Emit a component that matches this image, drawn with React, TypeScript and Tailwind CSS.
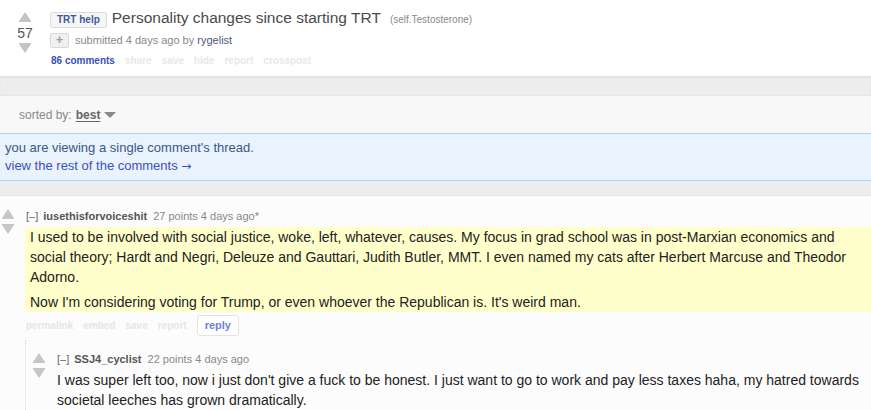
function Arrow({ dir, color = "#c6c6c6" }: { dir: "up" | "down"; color?: string }) {
  const pts = dir === "up" ? "6,0 12,9 12,10 0,10 0,9" : "0,0 12,0 12,1 6,10 0,1";
  return (
    <svg width="12" height="10" viewBox="0 0 12 10" className="block">
      <polygon points={pts} fill={color} />
    </svg>
  );
}

function Tagline({ user, meta }: { user: string; meta: string }) {
  return (
    <div className="text-[11px] leading-[14px] text-[#888]">
      <span className="text-[#666]">[–]</span>
      <span className="ml-[5px] font-bold text-[#555]">{user}</span>
      <span className="ml-[6px]">{meta}</span>
    </div>
  );
}

export default function App() {
  return (
    <div className="min-h-[410px] bg-[#fcfcfc] font-['Liberation_Sans',Arial,sans-serif]">
      <header className="flex h-[76px] bg-white">
        <div className="flex w-[50px] flex-col items-center pt-[12px]">
          <Arrow dir="up" color="#c3c3c3" />
          <div className="h-[21px] text-[14px] leading-[22px] text-[#555]">57</div>
          <Arrow dir="down" color="#c3c3c3" />
        </div>
        <div className="pt-[8px]">
          <div className="flex items-baseline">
            <span className="rounded-[2px] border border-[#dcdcdc] bg-[#f6f6f6] px-[6px] text-[10px] font-bold leading-[14px] text-[#3d5a96]">
              TRT help
            </span>
            <span className="ml-[5px] text-[15.5px] leading-[20px] text-[#4a4a4a]">
              Personality changes since starting TRT
            </span>
            <span className="ml-[9px] text-[10px] text-[#888]">(self.Testosterone)</span>
          </div>
          <div className="mt-[4px] flex items-center">
            <span className="flex h-[15px] w-[19px] items-center justify-center rounded-[2px] border border-[#d8d8d8] bg-[#f0f0f0] text-[12px] font-bold leading-none text-[#9a9a9a]">
              +
            </span>
            <span className="ml-[6px] text-[11px] text-[#888]">
              submitted 4 days ago by <span className="text-[#4a5a78]">rygelist</span>
            </span>
          </div>
          <div className="mt-[5px] flex gap-[10px] pl-[1px] text-[10px] font-bold leading-[14px]">
            <span className="text-[#3a4fb8]">86 comments</span>
            <span className="text-[#e8e8e8]">share</span>
            <span className="text-[#e8e8e8]">save</span>
            <span className="text-[#e8e8e8]">hide</span>
            <span className="text-[#e8e8e8]">report</span>
            <span className="text-[#e8e8e8]">crosspost</span>
          </div>
        </div>
      </header>

      <div className="h-[19px] border-t border-[#e2e2e2] bg-[#ededed] shadow-[inset_0_1px_2px_rgba(0,0,0,0.06)]" />

      <div className="flex h-[38px] items-center border-t border-[#e6e6e6] bg-[#f8f8f8] pl-[19px] text-[12px] text-[#888]">
        sorted by:
        <span className="ml-[4px] font-bold text-[#666] underline underline-offset-2">best</span>
        <svg width="12" height="7" viewBox="0 0 12 7" className="ml-[4px] mt-[2px]">
          <polygon points="0,0 12,0 6,6" fill="#888" />
        </svg>
      </div>

      <div className="border-y border-[#a6d3f7] bg-[#e9f3fd] px-[5px] py-[5px] text-[13px] leading-[18px]">
        <div className="text-[#3c5788]">you are viewing a single comment's thread.</div>
        <div className="text-[#3b4fc0]">
          view the rest of the comments <span className="font-['DejaVu_Sans',sans-serif] text-[12px]">→</span>
        </div>
      </div>

      <div className="h-[15px] border-b border-[#e4e4e4] bg-[#ededed]" />

      <div className="flex pl-[2px] pt-[13px]">
        <div className="flex w-[24px] shrink-0 flex-col gap-[5px]">
          <Arrow dir="up" />
          <Arrow dir="down" />
        </div>
        <div className="flex-1">
          <Tagline user="iusethisforvoiceshit" meta="27 points 4 days ago*" />
          <div className="-ml-[1px] mt-[4px] bg-[#ffffcc] px-[5px] text-[14px] leading-[20px] text-[#222]">
            <p className="max-w-[840px]">
              I used to be involved with social justice, woke, left, whatever, causes. My focus in grad
              school was in post-Marxian economics and social theory; Hardt and Negri, Deleuze and
              Gauttari, Judith Butler, MMT. I even named my cats after Herbert Marcuse and Theodor
              Adorno.
            </p>
            <p className="mt-[5px]">
              Now I'm considering voting for Trump, or even whoever the Republican is. It's weird man.
            </p>
          </div>
          <div className="mt-[3px] flex h-[21px] items-center gap-[10px] text-[10px] font-bold">
            <span className="text-[#e6e6e6]">permalink</span>
            <span className="text-[#e6e6e6]">embed</span>
            <span className="text-[#e6e6e6]">save</span>
            <span className="text-[#e6e6e6]">report</span>
            <span className="flex h-[21px] items-center rounded-[3px] border border-[#e3e3e3] bg-white px-[7px] text-[11px] text-[#6b80e8]">
              reply
            </span>
          </div>

          <div className="-ml-[1px] mt-[4px] flex border-l border-dotted border-[#d6d6d6] pl-[7px] pt-[12px]">
            <div className="flex w-[24px] shrink-0 flex-col gap-[5px] pt-[1px]">
              <Arrow dir="up" />
              <Arrow dir="down" />
            </div>
            <div className="flex-1">
              <Tagline user="SSJ4_cyclist" meta="22 points 4 days ago" />
              <div className="mt-[4px] pr-[5px] text-[14px] leading-[20px] text-[#222]">
                I was super left too, now i just don't give a fuck to be honest. I just want to go to work
                and pay less taxes haha, my hatred towards societal leeches has grown dramatically.
              </div>
            </div>
          </div>
        </div>
      </div>
    </div>
  );
}
